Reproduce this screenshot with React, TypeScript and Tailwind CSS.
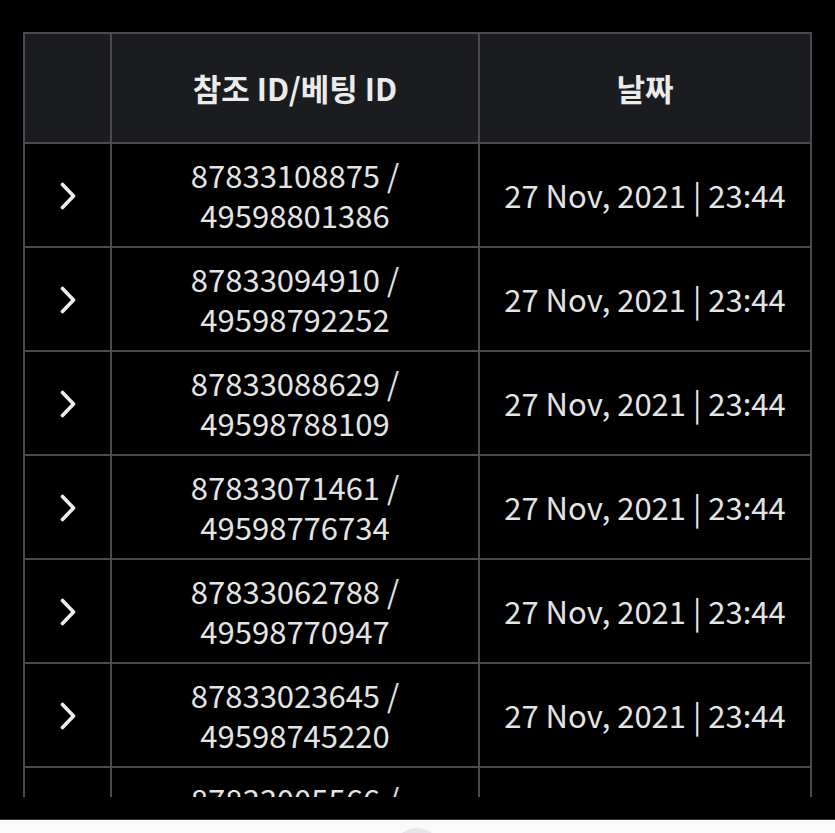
import React from "react";

const rows = [
  ["87833108875", "49598801386"],
  ["87833094910", "49598792252"],
  ["87833088629", "49598788109"],
  ["87833071461", "49598776734"],
  ["87833062788", "49598770947"],
  ["87833023645", "49598745220"],
  ["87833005566", "49598733333"],
];

function Chevron() {
  return (
    <svg width="18" height="28" viewBox="0 0 18 28" fill="none">
      <path d="M3.5 2.5 L14.5 14 L3.5 25.5" stroke="#ededed" strokeWidth="3.6" strokeLinecap="round" strokeLinejoin="round" />
    </svg>
  );
}

export default function App() {
  const font = { fontFamily: '"Noto Sans CJK KR", "Noto Sans", sans-serif' };
  return (
    <div className="w-[835px] h-[833px] bg-black overflow-hidden" style={font}>
      <div className="h-[819px] bg-black">
        <div className="h-[797px] pt-[32px] overflow-hidden">
          <div className="ml-[23px] w-[789px] border-2 border-[#4a4a4f] bg-[#4a4a4f] grid grid-cols-[85px_366px_330px] gap-[2px]">
            <div className="h-[108px] bg-[#1b1c20]" />
            <div className="h-[108px] bg-[#1b1c20] flex items-center justify-center text-[31px] font-bold text-[#ebebeb]">
              참조 ID/베팅 ID
            </div>
            <div className="h-[108px] bg-[#1b1c20] flex items-center justify-center text-[31px] font-bold text-[#ebebeb]">
              날짜
            </div>
            {rows.map(([a, b], i) => (
              <React.Fragment key={i}>
                <div className="h-[102px] bg-black flex items-center justify-center pt-[2px]">
                  <Chevron />
                </div>
                <div className="h-[102px] bg-black flex items-center justify-center">
                  <p className="text-center text-[31px] leading-[40px] text-[#e4e4e4]">
                    {a} /<br />
                    {b}
                  </p>
                </div>
                <div className="h-[102px] bg-black flex items-center justify-center text-[31px] text-[#e4e4e4]">
                  27 Nov, 2021 | 23:44
                </div>
              </React.Fragment>
            ))}
          </div>
        </div>
      </div>
      <div className="relative h-[14px] bg-[#fafafa] border-t border-[#3a3a3a] overflow-hidden">
        <div className="absolute left-[392px] top-[8px] w-[50px] h-[50px] rounded-full bg-[#e6e6ea]" />
      </div>
    </div>
  );
}
